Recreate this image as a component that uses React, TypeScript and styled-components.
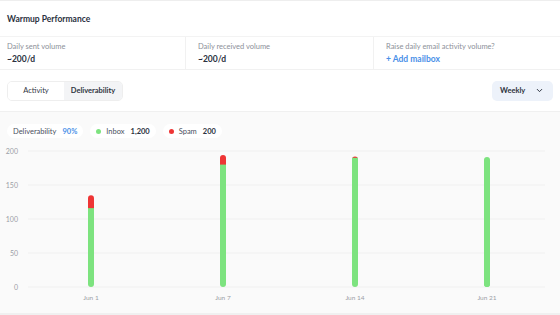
import styled, { createGlobalStyle } from "styled-components";

const GlobalStyle = createGlobalStyle`
	html, body {
		margin: 0;
		padding: 0;
		background: #ffffff;
	}
	body {
		font-family: Lato, "Noto Sans", sans-serif;
		color: #2d3340;
	}
`;

const Page = styled.div`
	width: 560px;
	height: 315px;
	overflow: hidden;
	display: flex;
	flex-direction: column;
	border-top: 1px solid #eeeeee;
	box-sizing: border-box;
`;

const Header = styled.div`
	height: 35px;
	display: flex;
	align-items: center;
	padding: 0 7px;
`;

const Title = styled.h1`
	margin: 0;
	font-size: 8.5px;
	font-weight: 700;
	color: #2b3140;
`;

const StatsRow = styled.div`
	display: grid;
	grid-template-columns: 185px 188px 1fr;
	height: 32px;
	border-top: 1px solid #f3f3f3;
	border-bottom: 1px solid #f1f1f1;
`;

const StatCell = styled.div<{ $first?: boolean }>`
	display: flex;
	flex-direction: column;
	justify-content: center;
	gap: 3px;
	padding-left: ${(p) => (p.$first ? "7px" : "12px")};
	border-left: ${(p) => (p.$first ? "none" : "1px solid #f1f1f1")};
`;

const StatLabel = styled.span`
	font-size: 7.5px;
	color: #8c9099;
`;

const StatValue = styled.span<{ $link?: boolean }>`
	font-size: 8.5px;
	font-weight: 700;
	color: ${(p) => (p.$link ? "#4a90e8" : "#2b3140")};
`;

const Controls = styled.div`
	height: 41px;
	display: flex;
	align-items: center;
	justify-content: space-between;
	padding: 0 7px 0 7px;
	border-bottom: 1px solid #f0f0f0;
`;

const Segmented = styled.div`
	display: flex;
	height: 20px;
	border: 1px solid #eeeeee;
	border-radius: 5px;
	overflow: hidden;
	box-sizing: border-box;
`;

const Segment = styled.button<{ $active?: boolean }>`
	border: none;
	margin: 0;
	padding: 0;
	width: ${(p) => (p.$active ? "58px" : "56px")};
	font-family: inherit;
	font-size: 7.5px;
	font-weight: ${(p) => (p.$active ? 700 : 400)};
	color: #2f3542;
	background: ${(p) => (p.$active ? "#f3f4f6" : "#ffffff")};
`;

const Dropdown = styled.button`
	display: flex;
	align-items: center;
	justify-content: space-between;
	width: 61px;
	height: 20px;
	padding: 0 9px 0 8px;
	border: none;
	border-radius: 5px;
	background: #edf2fa;
	font-family: inherit;
	font-size: 7.5px;
	font-weight: 700;
	color: #2d3340;
	box-sizing: border-box;
`;

const ChartSection = styled.div`
	flex: 1;
	background: #fafafa;
	display: flex;
	flex-direction: column;
	border-bottom: 2px solid #f0f0f0;
`;

const Legend = styled.div`
	display: flex;
	gap: 7px;
	padding: 12px 7px 0 7px;
`;

const Pill = styled.div`
	display: flex;
	align-items: center;
	gap: 4px;
	height: 14px;
	padding: 0 6px;
	background: #ffffff;
	border-radius: 7px;
	font-size: 7.5px;
	color: #4a5060;
`;

const Dot = styled.span<{ $color: string }>`
	width: 5px;
	height: 5px;
	border-radius: 50%;
	background: ${(p) => p.$color};
	margin-right: 1px;
`;

const PillValue = styled.span<{ $color?: string }>`
	font-weight: 700;
	color: ${(p) => p.$color || "#2b3140"};
	margin-left: 2px;
`;

const ChartSvg = styled.svg`
	display: block;
	margin-top: 2px;
	font-family: Lato, "Noto Sans", sans-serif;
`;

const GREEN = "#7de37f";
const RED = "#ee3535";

const bars = [
	{ label: "Jun 1", x: 91, inbox: 116, spam: 19 },
	{ label: "Jun 7", x: 223, inbox: 180, spam: 14 },
	{ label: "Jun 14", x: 355, inbox: 190, spam: 2 },
	{ label: "Jun 21", x: 487, inbox: 191, spam: 0 },
];

const top = 11;
const base = 147;
const scale = (base - top) / 200;
const ticks = [200, 150, 100, 50, 0];

const Chart = () => (
	<ChartSvg width={560} height={170} viewBox="0 0 560 170">
		{ticks.map((t) => {
			const y = base - t * scale;
			return (
				<g key={t}>
					<line x1={28} x2={545} y1={y} y2={y} stroke="#f0f0f0" strokeWidth={1} />
					<text x={18} y={y + 2.5} fontSize={7} fill="#9a9ea6" textAnchor="end">
						{t}
					</text>
				</g>
			);
		})}
		{bars.map((b) => {
			const greenTop = base - b.inbox * scale;
			const total = base - (b.inbox + b.spam) * scale;
			return (
				<g key={b.label}>
					{b.spam > 0 && (
						<line x1={b.x} x2={b.x} y1={total + 3} y2={greenTop + 2} stroke={RED} strokeWidth={6} strokeLinecap="round" />
					)}
					<line
						x1={b.x}
						x2={b.x}
						y1={b.spam > 0 ? greenTop : greenTop + 3}
						y2={base - 3}
						stroke={GREEN}
						strokeWidth={6}
						strokeLinecap={b.spam > 0 ? "butt" : "round"}
					/>
					<line x1={b.x} x2={b.x} y1={base - 6} y2={base - 3} stroke={GREEN} strokeWidth={6} strokeLinecap="round" />
					<text x={b.x} y={base + 13} fontSize={6.5} fill="#9a9ea6" textAnchor="middle">
						{b.label}
					</text>
				</g>
			);
		})}
	</ChartSvg>
);

const Chevron = () => (
	<svg width="9" height="9" viewBox="0 0 24 24" fill="none" stroke="#2d3340" strokeWidth={2.6} strokeLinecap="round" strokeLinejoin="round">
		<path d="M6 9l6 6 6-6" />
	</svg>
);

const App = () => {
	return (
		<>
			<GlobalStyle />
			<Page>
				<Header>
					<Title>Warmup Performance</Title>
				</Header>
				<StatsRow>
					<StatCell $first>
						<StatLabel>Daily sent volume</StatLabel>
						<StatValue>~200/d</StatValue>
					</StatCell>
					<StatCell>
						<StatLabel>Daily received volume</StatLabel>
						<StatValue>~200/d</StatValue>
					</StatCell>
					<StatCell>
						<StatLabel>Raise daily email activity volume?</StatLabel>
						<StatValue $link>+ Add mailbox</StatValue>
					</StatCell>
				</StatsRow>
				<Controls>
					<Segmented>
						<Segment>Activity</Segment>
						<Segment $active>Deliverability</Segment>
					</Segmented>
					<Dropdown>
						Weekly
						<Chevron />
					</Dropdown>
				</Controls>
				<ChartSection>
					<Legend>
						<Pill>
							Deliverability
							<PillValue $color="#4a8fe8">90%</PillValue>
						</Pill>
						<Pill>
							<Dot $color={GREEN} />
							Inbox
							<PillValue>1,200</PillValue>
						</Pill>
						<Pill>
							<Dot $color={RED} />
							Spam
							<PillValue>200</PillValue>
						</Pill>
					</Legend>
					<Chart />
				</ChartSection>
			</Page>
		</>
	);
};

export default App;
